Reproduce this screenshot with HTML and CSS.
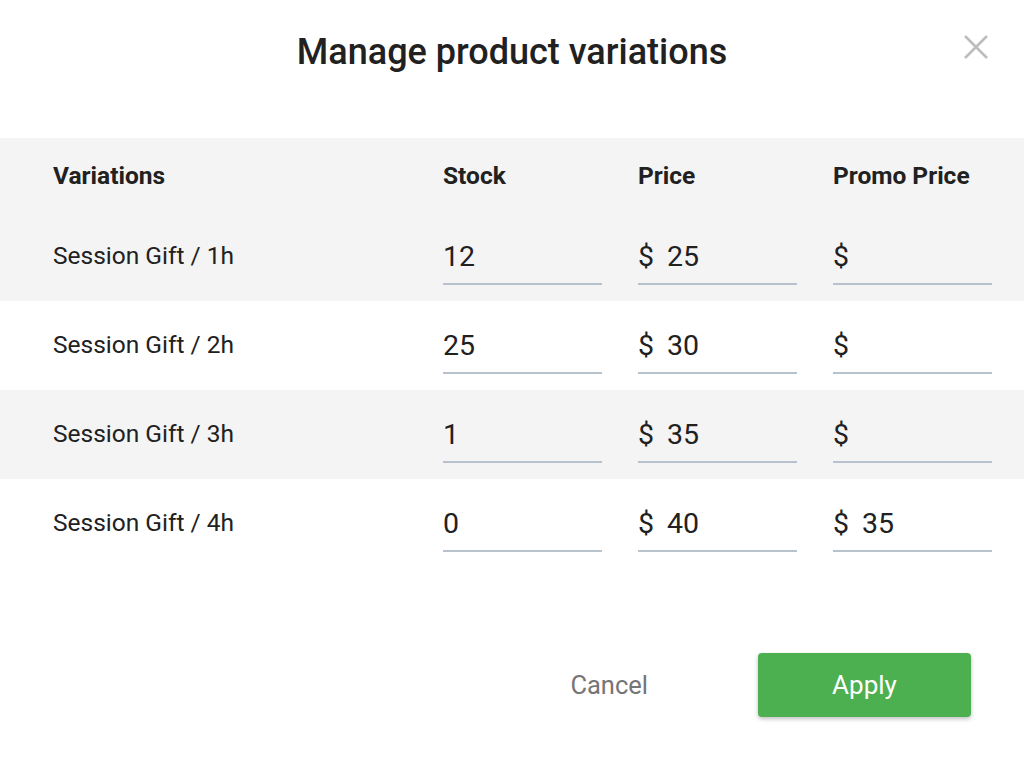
FILE: index.html
```html
<!DOCTYPE html>
<html lang="en">
<head>
    <meta charset="UTF-8">
    <meta name="viewport" content="width=device-width, initial-scale=1.0">
    <title>Manage product variations</title>
    <link rel="stylesheet" href="styles.css">
</head>
<body>
    <div class="modal">
        <div class="modal-head">
            <h1>Manage product variations</h1>
            <button class="close" aria-label="Close">
                <svg width="26" height="26" viewBox="0 0 26 26"><path d="M2 2L24 24M24 2L2 24" stroke="#bdbdbd" stroke-width="2.6" fill="none"/></svg>
            </button>
        </div>
        <div class="table">
            <div class="row head">
                <div class="cell name">Variations</div>
                <div class="cell">Stock</div>
                <div class="cell">Price</div>
                <div class="cell">Promo Price</div>
            </div>
            <div class="row gray">
                <div class="cell name">Session Gift / 1h</div>
                <div class="cell"><label class="field"><input type="text" value="12"></label></div>
                <div class="cell"><label class="field"><span class="cur">$</span><input type="text" value="25"></label></div>
                <div class="cell"><label class="field"><span class="cur">$</span><input type="text" value=""></label></div>
            </div>
            <div class="row">
                <div class="cell name">Session Gift / 2h</div>
                <div class="cell"><label class="field"><input type="text" value="25"></label></div>
                <div class="cell"><label class="field"><span class="cur">$</span><input type="text" value="30"></label></div>
                <div class="cell"><label class="field"><span class="cur">$</span><input type="text" value=""></label></div>
            </div>
            <div class="row gray">
                <div class="cell name">Session Gift / 3h</div>
                <div class="cell"><label class="field"><input type="text" value="1"></label></div>
                <div class="cell"><label class="field"><span class="cur">$</span><input type="text" value="35"></label></div>
                <div class="cell"><label class="field"><span class="cur">$</span><input type="text" value=""></label></div>
            </div>
            <div class="row">
                <div class="cell name">Session Gift / 4h</div>
                <div class="cell"><label class="field"><input type="text" value="0"></label></div>
                <div class="cell"><label class="field"><span class="cur">$</span><input type="text" value="40"></label></div>
                <div class="cell"><label class="field"><span class="cur">$</span><input type="text" value="35"></label></div>
            </div>
        </div>
        <div class="actions">
            <button class="btn-cancel">Cancel</button>
            <button class="btn-apply">Apply</button>
        </div>
    </div>
</body>
</html>
```

FILE: styles.css
```css
*{box-sizing:border-box;font-family:Roboto, 'Liberation Sans', sans-serif;}
body{margin:0;background:#fff;color:#212121;}
.modal{width:1024px;height:771px;}
.modal-head{position:relative;height:138px;padding-top:29px;text-align:center;}
.modal-head h1{margin:0;font-size:36px;font-weight:500;line-height:46px;color:#212121;}
.close{position:absolute;top:34px;right:35px;width:26px;height:26px;padding:0;border:0;background:none;cursor:pointer;}
.close svg{display:block;}
.row{display:grid;grid-template-columns:354px 159px 159px 159px;column-gap:36px;height:89px;padding-left:53px;align-items:end;}
.row.head{height:74px;align-items:center;background:#f4f4f4;font-weight:700;}
.row.gray{background:#f4f4f4;}
.cell{font-size:24.5px;}
.row .cell.name{padding-bottom:31px;}
.row.head .cell.name{padding-bottom:0;}
.field{display:flex;align-items:center;height:46px;margin-bottom:16px;padding-bottom:9px;border-bottom:2px solid #b8c2cc;font-size:28.5px;}
.cur{margin-right:13px;}
.field input{flex:1;width:0;height:35px;padding:0;border:0;outline:0;background:transparent;font-size:28.5px;color:#212121;}
.actions{display:flex;justify-content:flex-end;align-items:center;gap:110px;padding:85px 53px 0 0;}
.btn-cancel{padding:0;border:0;background:none;font-size:25.5px;color:#757575;cursor:pointer;}
.btn-apply{width:213px;height:64px;border:0;border-radius:4px;background:#4caf50;color:#fff;font-size:26px;font-weight:400;box-shadow:0 2px 4px rgba(0,0,0,.25);cursor:pointer;}
```
